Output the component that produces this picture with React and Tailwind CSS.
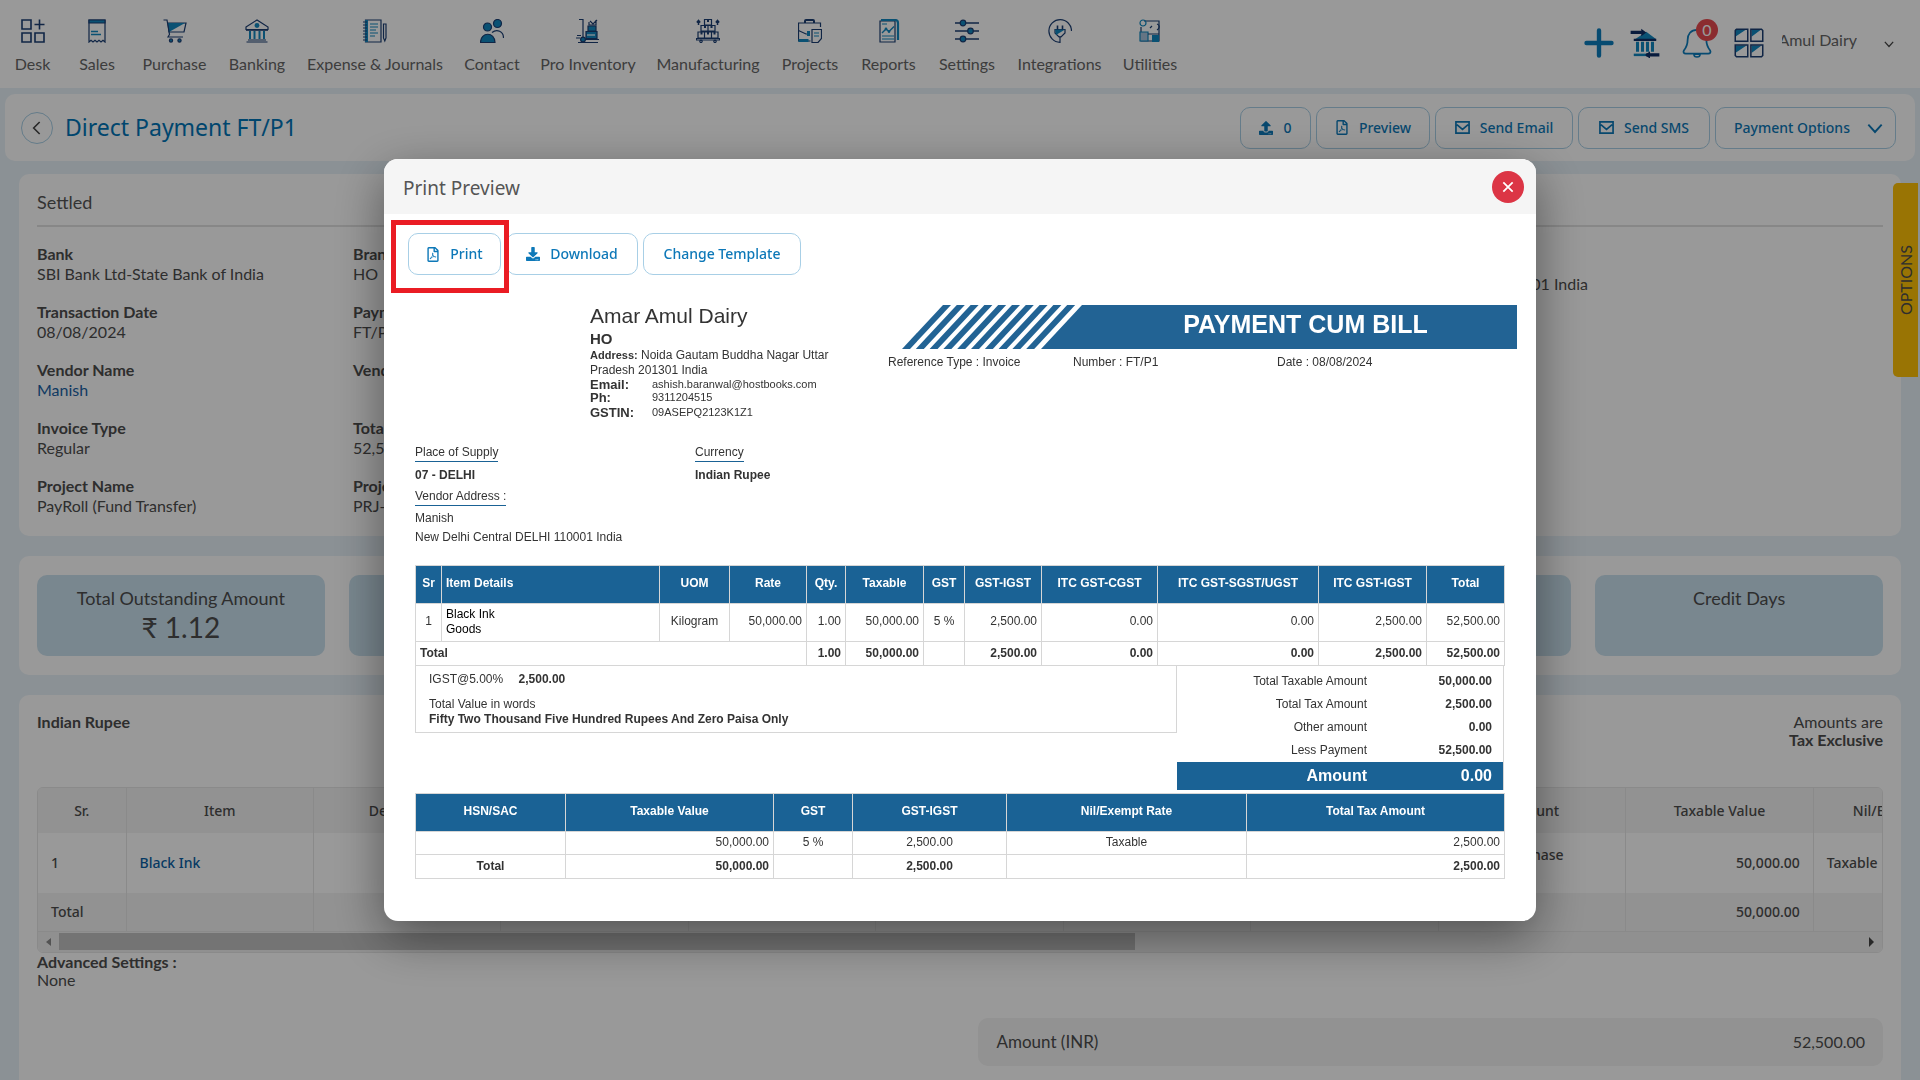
import { FaUpload, FaDownload, FaRegFilePdf } from 'react-icons/fa'

const DARK = '#1c3f74'
const BLUE = '#1288c0'

function Icon({ children, className = 'w-6 h-6' }) {
  return (
    <svg viewBox="0 0 24 24" className={className} fill="none" stroke={DARK} strokeWidth="1.2" aria-hidden="true">
      {children}
    </svg>
  )
}

const icons = {
  desk: (
    <Icon>
      <path d="M1 1h9v9H1zM1 14h9v9H1zM14 14h9v9h-9z" strokeWidth="1.6" />
      <path d="M18.500 0.500v10M13.500 5.500h10" strokeWidth="1.6" />
    </Icon>
  ),
  sales: (
    <Icon>
      <path d="M4 1h16v22l-2-1.800-2 1.800-2-1.800-2 1.800-2-1.800-2 1.800-2-1.800L4 23z" />
      <path d="M4 1h16v3H4z" fill={BLUE} />
      <path d="M6 12.500h7M6 15.500h10" stroke={BLUE} strokeWidth="1.4" />
    </Icon>
  ),
  purchase: (
    <Icon>
      <path d="M5 4h18l-2 9H6z" />
      <path d="M5 4h17L6 13z" fill={BLUE} stroke="none" />
      <path d="M0.500 1H4l2.500 14.500L5 18h15" />
      <circle cx="8" cy="21.500" r="1.600" fill={BLUE} />
      <circle cx="16.500" cy="21.500" r="1.600" fill={BLUE} />
    </Icon>
  ),
  banking: (
    <Icon>
      <path d="M1 8 12 1l11 7v2.500H1z" />
      <circle cx="12" cy="6.500" r="2.400" fill={BLUE} stroke="none" />
      <path d="M1 11h22" strokeWidth="1.6" />
      <path d="M5 12v8M9.500 12v8M14.500 12v8M19 12v8" strokeWidth="2" stroke={BLUE} />
      <path d="M3 21h18M1.500 23h21" />
    </Icon>
  ),
  expense: (
    <Icon>
      <path d="M2.500 1h15.500v22H2.500z" />
      <path d="M2 1h3v22H2z" fill={BLUE} stroke="none" />
      <path d="M0 3h4M0 6h4M0 9h4M0 12h4M0 15h4M0 18h4M0 21h4" />
      <path d="M7 5h8M7 8h8M7 11h6M7 14h8M7 17h5" stroke={BLUE} />
      <path d="M20.500 5h2.500v14l-1.200 3-1.300-3z" />
    </Icon>
  ),
  contact: (
    <Icon>
      <circle cx="7.500" cy="8" r="4" fill={BLUE} />
      <circle cx="17.500" cy="4.500" r="4" fill={BLUE} />
      <path d="M0.500 23.500c0-11 14.500-11 14.500 0z" fill={BLUE} />
      <path d="M12 13.500c5-4 11.500-1 11.500 5.500" />
    </Icon>
  ),
  inventory: (
    <Icon>
      <path d="M3 0.500h4v18M1 16.500h4M0 19h4M2 23.500h20M8 20.500h15" />
      <circle cx="7" cy="20.500" r="2.400" fill={BLUE} />
      <path d="M10 12.500h11v7H10z" fill={BLUE} />
      <path d="M12 7h8v5h-8z" fill={BLUE} />
      <path d="M13 3v3h7V1M14 2l3 3 4-4" />
      <path d="M11 16h8" stroke="white" />
    </Icon>
  ),
  manufacturing: (
    <Icon>
      <path d="M8.500 0.500h7v5.500h-7zM5 6.500h7V12H5zM12 6.500h7V12h-7zM2 13h6.500v6H2zM8.500 13h7v6h-7zM15.500 13H22v6h-6.500z" />
      <path d="M11 0.500h2v2.500h-2zM8 6.500h2V9H8zM14.500 6.500h2V9h-2zM4.500 13h2v2.500h-2zM11 13h2v2.500h-2zM17.500 13h2v2.500h-2z" fill={DARK} stroke="none" />
      <path d="M0.500 19.500h23v1.500H0.500z" />
      <circle cx="5" cy="22.300" r="1.200" />
      <circle cx="19" cy="22.300" r="1.200" />
      <path d="M2.500 6V2M0.800 3.500l1.700-2 1.700 2M21.500 6V2M19.800 3.500l1.700-2 1.700 2" strokeWidth="1.500" />
    </Icon>
  ),
  projects: (
    <Icon>
      <path d="M7 4V2q0-1 1-1h7q1 0 1 1v2" strokeWidth="2" />
      <path d="M22.500 8V4H0.500v18h12" />
      <path d="M0.500 11.500 8 15h3" />
      <path d="M9 12h3v5H9z" fill={BLUE} stroke="none" />
      <path d="M0.500 21.500h10" stroke={BLUE} strokeWidth="3" />
      <path d="M14 10.500h9.500v9l-3.500 4h-6z" />
      <path d="M16 14h5M16 17h5" stroke={BLUE} />
    </Icon>
  ),
  reports: (
    <Icon>
      <path d="M3 2h15v21H3z" />
      <path d="M4 1h14q3 0 3 3v17" stroke={BLUE} strokeWidth="2.200" />
      <path d="m5 14 4-4 3 2.500 5-5" stroke={BLUE} strokeWidth="1.400" />
      <circle cx="9" cy="10" r="0.800" fill={BLUE} stroke={BLUE} />
      <circle cx="12" cy="12.500" r="0.800" fill={BLUE} stroke={BLUE} />
      <path d="M5 5h5M5 17h12M5 20h12" stroke={BLUE} />
    </Icon>
  ),
  settings: (
    <Icon>
      <path d="M0 4h24M0 12h24M0 20h24" strokeWidth="1.400" />
      <circle cx="8" cy="4" r="2.800" fill={BLUE} />
      <circle cx="15.500" cy="12" r="2.800" fill={BLUE} />
      <circle cx="8" cy="20" r="2.800" fill={BLUE} />
    </Icon>
  ),
  integrations: (
    <Icon>
      <path d="M23.500 12A11.300 11.300 0 1 0 12 23.300V17" />
      <path d="M7 10.500h10V14l-4 4h-2l-4-4z" />
      <path d="M7 10.500h10L8 16z" fill={BLUE} stroke="none" />
      <path d="M9.500 10.500v-4M14.500 10.500v-4" strokeWidth="1.600" />
    </Icon>
  ),
  utilities: (
    <Icon>
      <path d="M6 2h15v20H3V8" />
      <path d="M2 22V13h8v9z" fill="#a9c3dd" stroke={BLUE} />
      <path d="M14 16h7v7h-7z" fill={BLUE} stroke="none" />
      <circle cx="5" cy="4" r="3" stroke={BLUE} />
      <path d="M10 15h11M12 9l2-2M19 5c3 1 3 4 0 6" />
    </Icon>
  ),
}

const navItems = [
  { label: 'Desk', icon: icons.desk, width: 'w-[37px]' },
  { label: 'Sales', icon: icons.sales, width: 'w-[46px]' },
  { label: 'Purchase', icon: icons.purchase, width: 'w-[63px]' },
  { label: 'Banking', icon: icons.banking, width: 'w-[56px]' },
  { label: 'Expense & Journals', icon: icons.expense, width: 'w-[134px]' },
  { label: 'Contact', icon: icons.contact, width: 'w-[54px]' },
  { label: 'Pro Inventory', icon: icons.inventory, width: 'w-[92px]' },
  { label: 'Manufacturing', icon: icons.manufacturing, width: 'w-[102px]' },
  { label: 'Projects', icon: icons.projects, width: 'w-[56px]' },
  { label: 'Reports', icon: icons.reports, width: 'w-[55px]' },
  { label: 'Settings', icon: icons.settings, width: 'w-[56px]' },
  { label: 'Integrations', icon: icons.integrations, width: 'w-[83px]' },
  { label: 'Utilities', icon: icons.utilities, width: 'w-[52px]' },
]

const mulish = "font-['Lato','Open_Sans',sans-serif]"
const segoe = "font-['Noto_Sans','Open_Sans',sans-serif]"

function Navbar() {
  return (
    <header className="h-[88px] shrink-0 bg-white flex justify-between">
      <nav className="flex gap-[23px] pl-[14px] pt-[19px]">
        {navItems.map(item => (
          <a key={item.label} href="#" className={`${item.width} flex flex-col items-center gap-[10px] whitespace-nowrap text-base leading-[22px] text-[#666]`}>
            {item.icon}
            <span>{item.label}</span>
          </a>
        ))}
      </nav>
      <div className="flex items-start pt-7 pr-[26px]">
        <button aria-label="Add" className="mr-4">
          <Icon className="w-[30px] h-[30px]"><path d="M12 2v20M2 12h20" stroke="#0d7dbd" strokeWidth="3.500" strokeLinecap="round" /></Icon>
        </button>
        <button aria-label="Bank transfer" className="mr-[22px]">
          <Icon className="w-[30px] h-[30px]">
            <path d="M4 9 13 3l8 6z" fill={BLUE} stroke="none" />
            <path d="M3 9.500h18" stroke="#0e2d66" strokeWidth="1.800" />
            <path d="M6 11v8M10 11v8M14 11v8M18 11v8" stroke={BLUE} strokeWidth="2.400" />
            <path d="M3 21.500h11" stroke={BLUE} strokeWidth="2" />
            <path d="M0.500 3.500h9M13 21.500h10.500" stroke="#0e2d66" strokeWidth="2.600" />
            <path d="m9 0.500 4 3-4 3zM16 18.500l-4 3 4 3z" fill="#0e2d66" stroke="none" />
          </Icon>
        </button>
        <button aria-label="Notifications" className="relative mr-[22px]">
          <Icon className="w-[30px] h-[30px]">
            <path d="M12 1.500c-5 0-7.500 3.500-7.500 8 0 4.500-1.500 6.500-3 8.500-.8 1.500 0 2.500 1.500 2.500h18c1.500 0 2.300-1 1.500-2.500-1.500-2-3-4-3-8.500 0-4.500-2.500-8-7.500-8z" stroke="#0d7dbd" strokeWidth="1.400" />
            <path d="M9.500 21c0 3 5 3 5 0z" stroke="#0d7dbd" strokeWidth="1.200" />
          </Icon>
          <span className="absolute -top-[9px] left-[14px] w-[22px] h-[22px] rounded-full bg-[#e84a4f] text-white text-base leading-[22px] text-center">0</span>
        </button>
        <button aria-label="Apps" className="mr-[18px]">
          <Icon className="w-[30px] h-[30px]">
            <path d="M1 1h9L1 7zM14 1h8l-8 6zM1 14h9l-9 6zM14 14h8l-8 6z" fill={BLUE} stroke="none" />
            <path d="M2 1h9v9.500H1V2zM13.500 1H22l1 1v8.500h-9.500zM1 13.500h10V23H2l-1-1zM13.500 13.500H23V22l-1 1h-8.500z" />
          </Icon>
        </button>
        <button className="flex items-center text-[#666]">
          <span className="w-[75px] flex justify-end overflow-hidden whitespace-nowrap text-base leading-6">Amar Amul Dairy</span>
          <Icon className="w-[10px] h-[10px] ml-[27px] mt-2"><path d="m2 7 10 11L22 7" stroke="#444" strokeWidth="3" /></Icon>
        </button>
      </div>
    </header>
  )
}

function MailCheck() {
  return (
    <svg viewBox="0 0 16 16" className="w-[15px] h-[15px]" fill="none" stroke="currentColor" strokeWidth="1.800" aria-hidden="true">
      <path d="M1 2h14v12H1zM2 5l6 5 6-5" />
    </svg>
  )
}

const btn = `h-[42px] rounded-[10px] border border-[#a8cfe6] bg-white text-[#0d78b8] text-sm font-medium flex items-center whitespace-nowrap ${segoe}`

function TitleBar() {
  return (
    <div className="mx-[5px] mt-1.5 h-[67px] shrink-0 bg-white rounded-[10px] flex items-center justify-between pl-4 pr-[19px]">
      <div className="flex items-center gap-3">
        <button aria-label="Back" className="w-8 h-8 rounded-full border border-[#a8cfe6] flex items-center justify-center">
          <Icon className="w-4 h-4"><path d="M16 3 7 12l9 9" stroke="#444" strokeWidth="2.400" /></Icon>
        </button>
        <h1 className={`text-[23px] leading-8 pb-0.5 text-[#0075b8] ${segoe}`}>Direct Payment FT/P1</h1>
      </div>
      <div className="flex gap-[5px]">
        <button className={`${btn} w-[71px] justify-center gap-[10px]`}><FaUpload className="w-[14px]" />0</button>
        <button className={`${btn} w-[114px] justify-center gap-[10px]`}><FaRegFilePdf className="w-[14px] h-[15px]" />Preview</button>
        <button className={`${btn} w-[138px] justify-center gap-[10px]`}><MailCheck />Send Email</button>
        <button className={`${btn} w-[132px] justify-center gap-[10px]`}><MailCheck />Send SMS</button>
        <button className={`${btn} w-[181px] justify-between pl-[18px] pr-3`}>
          Payment Options
          <Icon className="w-4 h-4"><path d="m2 7 10 11L22 7" stroke="currentColor" strokeWidth="2.800" /></Icon>
        </button>
      </div>
    </div>
  )
}

const details = [
  ['Bank', 'SBI Bank Ltd-State Bank of India', 'Branch', 'HO'],
  ['Transaction Date', '08/08/2024', 'Payment Number', 'FT/P1'],
  ['Vendor Name', 'Manish', 'Vendor GSTIN', ''],
  ['Invoice Type', 'Regular', 'Total Amount', '52,500.00'],
  ['Project Name', 'PayRoll (Fund Transfer)', 'Project Code', 'PRJ-1'],
]

function Field({ label, value }) {
  return (
    <div className="h-[58px] leading-5 text-[#4d4d4d]">
      <dt className="font-bold">{label}</dt>
      <dd>{value === 'Manish' ? <a href="#" className="text-[#1b62a5]">{value}</a> : value}</dd>
    </div>
  )
}

function Details() {
  return (
    <section className="bg-white rounded-[10px] h-[362px] px-[18px]">
      <h2 className="pt-4 pb-[11px] text-lg leading-6 text-[#555] border-b-2 border-[#e2e2e2]">Settled</h2>
      <div className="flex pt-[17px]">
        <dl className="w-[316px] shrink-0">{details.map(d => <Field key={d[0]} label={d[0]} value={d[1]} />)}</dl>
        <dl className="w-[316px] shrink-0">{details.map(d => <Field key={d[2]} label={d[2]} value={d[3]} />)}</dl>
        <p className="grow pr-[295px] pt-7 flex justify-end whitespace-nowrap text-[#4d4d4d]">New Delhi Central DELHI 110001 India</p>
      </div>
    </section>
  )
}

const tiles = [
  { label: 'Total Outstanding Amount', value: '₹ 1.12' },
  {}, {}, {}, {},
  { label: 'Credit Days' },
]

function Tiles() {
  return (
    <section className="bg-white rounded-[10px] h-[119px] px-[18px] py-[19px] grid grid-cols-6 gap-6">
      {tiles.map((t, i) => (
        <div key={i} className="bg-[#cae1ee] rounded-[10px] text-center pt-[11px] text-[#4d4d4d]">
          <p className="text-lg leading-6">{t.label}</p>
          <p className="text-[28px] leading-[34px]">{t.value}</p>
        </div>
      ))}
    </section>
  )
}

const lineHeaders = ['Sr.', 'Item', 'Description', '', '', '', '', '', 'Account', 'Taxable Value', 'Nil/Exempt Rate', '', '', '', '', '', '']

function LineItems() {
  return (
    <section className="bg-white rounded-t-[10px] grow px-[18px] pt-[18px] text-[#4d4d4d]">
      <div className="flex justify-between h-[74px] leading-[18px]">
        <p className="font-bold">Indian Rupee</p>
        <p className="text-right">Amounts are<br /><b>Tax Exclusive</b></p>
      </div>
      <div className="border border-[#e6e6e6] rounded-md overflow-hidden">
        <div className="overflow-hidden">
          <table className={`w-[3088px] table-fixed text-sm font-medium leading-4 ${segoe}`}>
            <colgroup><col className="w-[88px]" /></colgroup>
            <thead>
              <tr className="h-[45px] bg-[#f3f3f3]">
                {lineHeaders.map((h, i) => <th key={i} className="font-medium border-r border-[#e6e6e6]">{h}</th>)}
              </tr>
            </thead>
            <tbody>
              <tr className="h-[60px]">
                {lineHeaders.map((h, i) => (
                  <td key={i} className={`px-[13px] border-r border-[#e6e6e6] ${i === 9 ? 'text-right' : ''}`}>
                    {i === 0 && '1'}
                    {i === 1 && <a href="#" className="text-[#0b5fa5]">Black Ink</a>}
                    {i === 8 && <>Import Purchase<br />A/c</>}
                    {i === 9 && '50,000.00'}
                    {i === 10 && 'Taxable'}
                  </td>
                ))}
              </tr>
              <tr className="h-[38px] bg-[#f3f3f3] border-b border-[#e6e6e6]">
                {lineHeaders.map((h, i) => (
                  <td key={i} className={`px-[13px] border-r border-[#e6e6e6] ${i === 9 ? 'text-right' : ''}`}>
                    {i === 0 && 'Total'}
                    {i === 9 && '50,000.00'}
                  </td>
                ))}
              </tr>
            </tbody>
          </table>
        </div>
        <div className="h-5 bg-[#f1f1f1] flex items-center justify-between px-2">
          <div className="flex grow items-center gap-2">
            <span className="border-y-4 border-y-transparent border-r-[5px] border-r-[#8a8a8a]" />
            <span className="h-[17px] w-[59%] bg-[#c1c1c1]" />
          </div>
          <span className="border-y-[5px] border-y-transparent border-l-[5px] border-l-[#444]" />
        </div>
      </div>
      <p className="font-bold leading-[18px]">Advanced Settings :</p>
      <p className="leading-[18px]">None</p>
      <div className="ml-auto mt-[29px] w-[49%] h-12 px-[18px] rounded-[10px] bg-[#f3f3f3] flex items-center justify-between">
        <span className="text-[17px]">Amount (INR)</span>
        <span>52,500.00</span>
      </div>
    </section>
  )
}

function Banner() {
  const stripes = Array.from({ length: 10 }, (_, i) => i * 13.8)
  return (
    <div className="flex h-11">
      <svg viewBox="0 0 180 44" className="w-[180px] h-11 shrink-0" fill="#226394" aria-hidden="true">
        {stripes.map(x => <path key={x} d={`M${x} 44h8l41-44h-8z`} />)}
        <path d="M139 44 180 0v44z" />
      </svg>
      <p className="grow bg-[#226394] text-white text-[25px] font-bold text-center leading-[38px] pl-3">PAYMENT CUM BILL</p>
    </div>
  )
}

const itemCols = [
  ['Sr', 'w-[26px]'], ['Item Details', 'w-[218px]'], ['UOM', 'w-[70px]'], ['Rate', 'w-[77px]'],
  ['Qty.', 'w-[39px]'], ['Taxable', 'w-[78px]'], ['GST', 'w-[41px]'], ['GST-IGST', 'w-[77px]'],
  ['ITC GST-CGST', 'w-[116px]'], ['ITC GST-SGST/UGST', 'w-[161px]'], ['ITC GST-IGST', 'w-[108px]'], ['Total', 'w-[78px]'],
]
const itemTotals = ['1.00', '50,000.00', '', '2,500.00', '0.00', '0.00', '2,500.00', '52,500.00']

const taxCols = [
  ['HSN/SAC', 'w-[150px]'], ['Taxable Value', 'w-[208px]'], ['GST', 'w-[79px]'],
  ['GST-IGST', 'w-[154px]'], ['Nil/Exempt Rate', 'w-[240px]'], ['Total Tax Amount', 'w-[258px]'],
]

const summary = [
  ['Total Taxable Amount', '50,000.00'],
  ['Total Tax Amount', '2,500.00'],
  ['Other amount', '0.00'],
  ['Less Payment', '52,500.00'],
]

const cell = 'border border-[#d6d6d6] px-1'

function ItemTable() {
  return (
    <table className="w-full table-fixed border-collapse text-xs leading-[15px]">
      <colgroup>{itemCols.map(c => <col key={c[0]} className={c[1]} />)}</colgroup>
      <thead>
        <tr className="h-[38px] bg-[#1a6295] text-white">
          {itemCols.map((c, i) => <th key={c[0]} className={`${cell} whitespace-nowrap pb-0.5 ${i === 1 ? 'text-left' : 'text-center'}`}>{c[0]}</th>)}
        </tr>
      </thead>
      <tbody>
        <tr className="h-[38px] text-right">
          <td className={`${cell} pb-0.5 text-center`}>1</td>
          <td className={`${cell} pb-0.5 text-left text-black`}>Black Ink<br />Goods</td>
          <td className={`${cell} pb-0.5 text-center`}>Kilogram</td>
          <td className={`${cell} pb-0.5`}>50,000.00</td>
          <td className={`${cell} pb-0.5`}>1.00</td>
          <td className={`${cell} pb-0.5`}>50,000.00</td>
          <td className={`${cell} pb-0.5 text-center`}>5 %</td>
          <td className={`${cell} pb-0.5`}>2,500.00</td>
          <td className={`${cell} pb-0.5`}>0.00</td>
          <td className={`${cell} pb-0.5`}>0.00</td>
          <td className={`${cell} pb-0.5`}>2,500.00</td>
          <td className={`${cell} pb-0.5`}>52,500.00</td>
        </tr>
        <tr className="h-6 text-right font-bold">
          <td colSpan={4} className={`${cell} text-left`}>Total</td>
          {itemTotals.map((t, i) => <td key={i} className={cell}>{t}</td>)}
        </tr>
      </tbody>
    </table>
  )
}

function TaxTable() {
  return (
    <table className="w-full table-fixed border-collapse text-xs leading-[15px] mt-[3px]">
      <colgroup>{taxCols.map(c => <col key={c[0]} className={c[1]} />)}</colgroup>
      <thead>
        <tr className="h-[38px] bg-[#1a6295] text-white">
          {taxCols.map(c => <th key={c[0]} className={`${cell} pb-0.5`}>{c[0]}</th>)}
        </tr>
      </thead>
      <tbody className="text-center">
        <tr className="h-[23px]">
          <td className={cell}></td>
          <td className={`${cell} pb-0.5 text-right`}>50,000.00</td>
          <td className={`${cell} pb-0.5`}>5 %</td>
          <td className={`${cell} pb-0.5`}>2,500.00</td>
          <td className={`${cell} pb-0.5`}>Taxable</td>
          <td className={`${cell} pb-0.5 text-right`}>2,500.00</td>
        </tr>
        <tr className="h-6 font-bold">
          <td className={cell}>Total</td>
          <td className={`${cell} text-right`}>50,000.00</td>
          <td className={cell}></td>
          <td className={cell}>2,500.00</td>
          <td className={cell}></td>
          <td className={`${cell} text-right`}>2,500.00</td>
        </tr>
      </tbody>
    </table>
  )
}

function Invoice() {
  return (
    <div className="font-['Liberation_Sans',Arial,sans-serif] text-xs text-[#333] pt-[30px] pb-[42px]">
      <div className="flex h-[139px] pl-[206px] pr-[19px]">
        <div className="w-[298px] shrink-0 pr-[40px]">
          <p className="text-[21px] leading-[22px] pb-[3px]">Amar Amul Dairy</p>
          <p className="text-[15px] leading-[18px] font-bold">HO</p>
          <p className="text-xs leading-[15px]"><b className="text-[11px]">Address:</b> Noida Gautam Buddha Nagar Uttar Pradesh 201301 India</p>
          <dl className="grid grid-cols-[62px_1fr] leading-[13px]">
            <dt className="text-[13px] font-bold">Email:</dt><dd className="text-[11px]">ashish.baranwal@hostbooks.com</dd>
            <dt className="text-[13px] font-bold">Ph:</dt><dd className="text-[11px]">9311204515</dd>
            <dt className="text-[13px] font-bold pt-0.5">GSTIN:</dt><dd className="text-[11px] pt-0.5">09ASEPQ2123K1Z1</dd>
          </dl>
        </div>
        <div className="grow">
          <div className="pl-[14px]"><Banner /></div>
          <div className="flex pt-[5px] leading-4">
            <p className="w-[185px]">Reference Type : Invoice</p>
            <p className="w-[204px]">Number : FT/P1</p>
            <p>Date : 08/08/2024</p>
          </div>
        </div>
      </div>
      <div className="pl-[31px] pr-8">
        <div className="flex h-11 leading-4">
          <div className="w-[280px]">
            <p><span className="inline-block border-b border-[#1a6295] pb-px">Place of Supply</span></p>
            <p className="pt-[5px] font-bold">07 - DELHI</p>
          </div>
          <div>
            <p><span className="inline-block border-b border-[#1a6295] pb-px">Currency</span></p>
            <p className="pt-[5px] font-bold">Indian Rupee</p>
          </div>
        </div>
        <p className="leading-4"><span className="inline-block border-b border-[#1a6295] pb-px">Vendor Address :</span></p>
        <p className="leading-5 pt-0.5">Manish</p>
        <p className="leading-[18px] pb-[19px]">New Delhi Central DELHI 110001 India</p>
        <ItemTable />
        <div className="flex items-start border-r border-[#d6d6d6]">
          <div className="grow h-[67px] pl-[13px] pt-1.5 border border-t-0 border-[#d6d6d6] leading-[15px]">
            <p className="pb-[10px]">IGST@5.00% <b className="pl-3">2,500.00</b></p>
            <p>Total Value in words</p>
            <p className="font-bold">Fifty Two Thousand Five Hundred Rupees And Zero Paisa Only</p>
          </div>
          <dl className="w-[326px] shrink-0 grid grid-cols-[1fr_136px] text-right">
            <div className="col-span-2 h-1" />
            {summary.map(([label, value]) => (
              <div key={label} className="contents leading-[23px]">
                <dt>{label}</dt>
                <dd className="font-bold pr-[11px]">{value}</dd>
              </div>
            ))}
            <dt className="bg-[#1a6295] text-white text-base leading-7 font-bold">Amount</dt>
            <dd className="bg-[#1a6295] text-white text-base leading-7 font-bold pr-[11px]">0.00</dd>
          </dl>
        </div>
        <TaxTable />
      </div>
    </div>
  )
}

function PrintPreview() {
  return (
    <div className="fixed inset-0 bg-black/40 flex items-start justify-center pt-[159px]">
      <div role="dialog" aria-labelledby="preview-title" className="w-[60%] bg-white rounded-[14px] overflow-hidden shadow-[0_16px_50px_rgba(0,0,0,0.45)]">
        <div className="h-[55px] bg-[#f5f5f5] flex items-center justify-between pl-[19px] pr-3">
          <h2 id="preview-title" className={`text-[19px] leading-6 pt-0.5 text-[#555] ${segoe}`}>Print Preview</h2>
          <button aria-label="Close" className="w-8 h-8 rounded-full bg-[#dc3545] flex items-center justify-center">
            <Icon className="w-[14px] h-[14px]"><path d="m4 4 16 16M20 4 4 20" stroke="white" strokeWidth="3" /></Icon>
          </button>
        </div>
        <div className="flex gap-[5px] pl-6 pt-[19px]">
          <div className="relative">
            <button className={`${btn} w-[93px] justify-center gap-[10px]`}><FaRegFilePdf className="w-[14px] h-[15px]" />Print</button>
            <div className="absolute -top-[13px] -left-[17px] w-[118px] h-[73px] border-5 border-[#ea1c24] pointer-events-none" />
          </div>
          <button className={`${btn} w-[132px] justify-center gap-[10px]`}><FaDownload className="w-[14px]" />Download</button>
          <button className={`${btn} w-[158px] justify-center`}>Change Template</button>
        </div>
        <Invoice />
      </div>
    </div>
  )
}

export default function App() {
  return (
    <div className={`h-screen overflow-hidden bg-[#e8f2f9] flex flex-col text-base ${mulish}`}>
      <Navbar />
      <TitleBar />
      <main className="grow flex flex-col gap-5 mt-[13px] px-[19px]">
        <Details />
        <Tiles />
        <LineItems />
      </main>
      <button className="absolute right-0.5 top-[183px] w-[25px] h-[194px] rounded-l-[5px] bg-[#ffc107] text-[#4d4d4d] text-base flex items-center justify-center">
        <span className="[writing-mode:sideways-lr]">OPTIONS</span>
      </button>
      <PrintPreview />
    </div>
  )
}
